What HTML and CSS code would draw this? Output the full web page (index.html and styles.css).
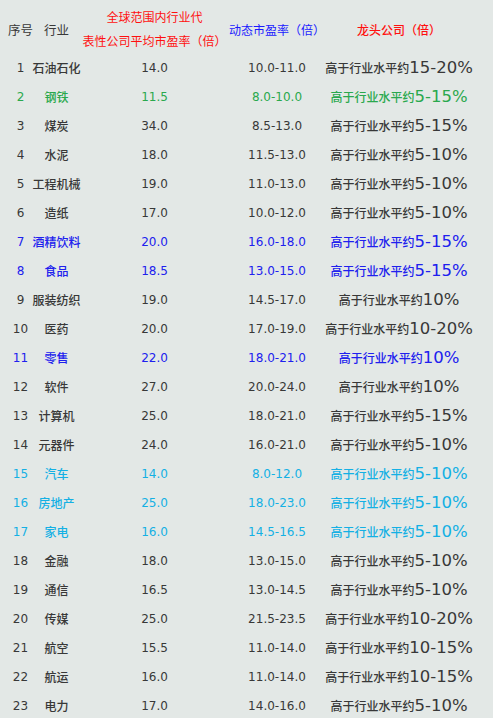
FILE: index.html
```html
<!DOCTYPE html>
<html lang="zh-CN">
<head>
<meta charset="utf-8">
<title>行业市盈率</title>
<link rel="stylesheet" href="styles.css">
</head>
<body>
<div class="table">
  <div class="row head">
    <div class="c1 gray">序号</div>
    <div class="c2 gray">行业</div>
    <div class="c3 red"><span>全球范围内行业代</span><span>表性公司平均市盈率（倍）</span></div>
    <div class="c4 hblue">动态市盈率（倍）</div>
    <div class="c5 red">龙头公司（倍）</div>
  </div>

  <div class="row gray"><div class="c1">1</div><div class="c2">石油石化</div><div class="c3">14.0</div><div class="c4">10.0-11.0</div><div class="c5">高于行业水平约<span class="big">15-20%</span></div></div>
  <div class="row green"><div class="c1">2</div><div class="c2">钢铁</div><div class="c3">11.5</div><div class="c4">8.0-10.0</div><div class="c5">高于行业水平约<span class="big">5-15%</span></div></div>
  <div class="row gray"><div class="c1">3</div><div class="c2">煤炭</div><div class="c3">34.0</div><div class="c4">8.5-13.0</div><div class="c5">高于行业水平约<span class="big">5-15%</span></div></div>
  <div class="row gray"><div class="c1">4</div><div class="c2">水泥</div><div class="c3">18.0</div><div class="c4">11.5-13.0</div><div class="c5">高于行业水平约<span class="big">5-10%</span></div></div>
  <div class="row gray"><div class="c1">5</div><div class="c2">工程机械</div><div class="c3">19.0</div><div class="c4">11.0-13.0</div><div class="c5">高于行业水平约<span class="big">5-10%</span></div></div>
  <div class="row gray"><div class="c1">6</div><div class="c2">造纸</div><div class="c3">17.0</div><div class="c4">10.0-12.0</div><div class="c5">高于行业水平约<span class="big">5-10%</span></div></div>
  <div class="row blue"><div class="c1">7</div><div class="c2">酒精饮料</div><div class="c3">20.0</div><div class="c4">16.0-18.0</div><div class="c5">高于行业水平约<span class="big">5-15%</span></div></div>
  <div class="row blue"><div class="c1">8</div><div class="c2">食品</div><div class="c3">18.5</div><div class="c4">13.0-15.0</div><div class="c5">高于行业水平约<span class="big">5-15%</span></div></div>
  <div class="row gray"><div class="c1">9</div><div class="c2">服装纺织</div><div class="c3">19.0</div><div class="c4">14.5-17.0</div><div class="c5">高于行业水平约<span class="big">10%</span></div></div>
  <div class="row gray"><div class="c1">10</div><div class="c2">医药</div><div class="c3">20.0</div><div class="c4">17.0-19.0</div><div class="c5">高于行业水平约<span class="big">10-20%</span></div></div>
  <div class="row blue"><div class="c1">11</div><div class="c2">零售</div><div class="c3">22.0</div><div class="c4">18.0-21.0</div><div class="c5">高于行业水平约<span class="big">10%</span></div></div>
  <div class="row gray"><div class="c1">12</div><div class="c2">软件</div><div class="c3">27.0</div><div class="c4">20.0-24.0</div><div class="c5">高于行业水平约<span class="big">10%</span></div></div>
  <div class="row gray"><div class="c1">13</div><div class="c2">计算机</div><div class="c3">25.0</div><div class="c4">18.0-21.0</div><div class="c5">高于行业水平约<span class="big">5-15%</span></div></div>
  <div class="row gray"><div class="c1">14</div><div class="c2">元器件</div><div class="c3">24.0</div><div class="c4">16.0-21.0</div><div class="c5">高于行业水平约<span class="big">5-10%</span></div></div>
  <div class="row cyan"><div class="c1">15</div><div class="c2">汽车</div><div class="c3">14.0</div><div class="c4">8.0-12.0</div><div class="c5">高于行业水平约<span class="big">5-10%</span></div></div>
  <div class="row cyan"><div class="c1">16</div><div class="c2">房地产</div><div class="c3">25.0</div><div class="c4">18.0-23.0</div><div class="c5">高于行业水平约<span class="big">5-10%</span></div></div>
  <div class="row cyan"><div class="c1">17</div><div class="c2">家电</div><div class="c3">16.0</div><div class="c4">14.5-16.5</div><div class="c5">高于行业水平约<span class="big">5-10%</span></div></div>
  <div class="row gray"><div class="c1">18</div><div class="c2">金融</div><div class="c3">18.0</div><div class="c4">13.0-15.0</div><div class="c5">高于行业水平约<span class="big">5-10%</span></div></div>
  <div class="row gray"><div class="c1">19</div><div class="c2">通信</div><div class="c3">16.5</div><div class="c4">13.0-14.5</div><div class="c5">高于行业水平约<span class="big">5-10%</span></div></div>
  <div class="row gray"><div class="c1">20</div><div class="c2">传媒</div><div class="c3">25.0</div><div class="c4">21.5-23.5</div><div class="c5">高于行业水平约<span class="big">10-20%</span></div></div>
  <div class="row gray"><div class="c1">21</div><div class="c2">航空</div><div class="c3">15.5</div><div class="c4">11.0-14.0</div><div class="c5">高于行业水平约<span class="big">10-15%</span></div></div>
  <div class="row gray"><div class="c1">22</div><div class="c2">航运</div><div class="c3">16.0</div><div class="c4">11.0-14.0</div><div class="c5">高于行业水平约<span class="big">10-15%</span></div></div>
  <div class="row gray"><div class="c1">23</div><div class="c2">电力</div><div class="c3">17.0</div><div class="c4">14.0-16.0</div><div class="c5">高于行业水平约<span class="big">5-10%</span></div></div>
</div>
</body>
</html>
```

FILE: styles.css
```css
html, body {
  margin: 0;
  padding: 0;
  background: #e3e8e6;
}
body {
  font-family: "DejaVu Sans", "Noto Sans CJK SC", sans-serif;
  font-size: 12px;
  color: #383838;
}
.table {
  padding: 5px 0 0 8px;
  display: flex;
  flex-direction: column;
}
.row {
  display: grid;
  grid-template-columns: 25px 47px 149px 96px 148px;
  height: 29px;
  align-items: center;
}
.row > div {
  display: flex;
  justify-content: center;
  align-items: baseline;
  white-space: nowrap;
}
.row.head {
  height: 48px;
}
.head .c1, .head .c2 {
  font-family: "Noto Sans CJK SC", sans-serif;
  font-size: 12.5px;
}
.head .c3 {
  flex-direction: column;
  align-items: center;
  line-height: 24px;
}
.head .c3, .head .c4, .head .c5 {
  font-family: "Noto Sans CJK SC", sans-serif;
  font-size: 12px;
}
.c2, .c5 {
  font-family: "Noto Sans CJK SC", sans-serif;
  font-weight: 500;
}
.head .c2 {
  font-weight: 400;
}
.big {
  font-family: "DejaVu Sans", sans-serif;
  font-weight: 400;
  font-size: 16.5px;
}
.gray { color: #383838; }
.green { color: #2aa84d; }
.blue { color: #2020ee; }
.hblue { color: #1a1aff; }
.cyan { color: #14b0e4; }
.red { color: #ff1010; }
```
